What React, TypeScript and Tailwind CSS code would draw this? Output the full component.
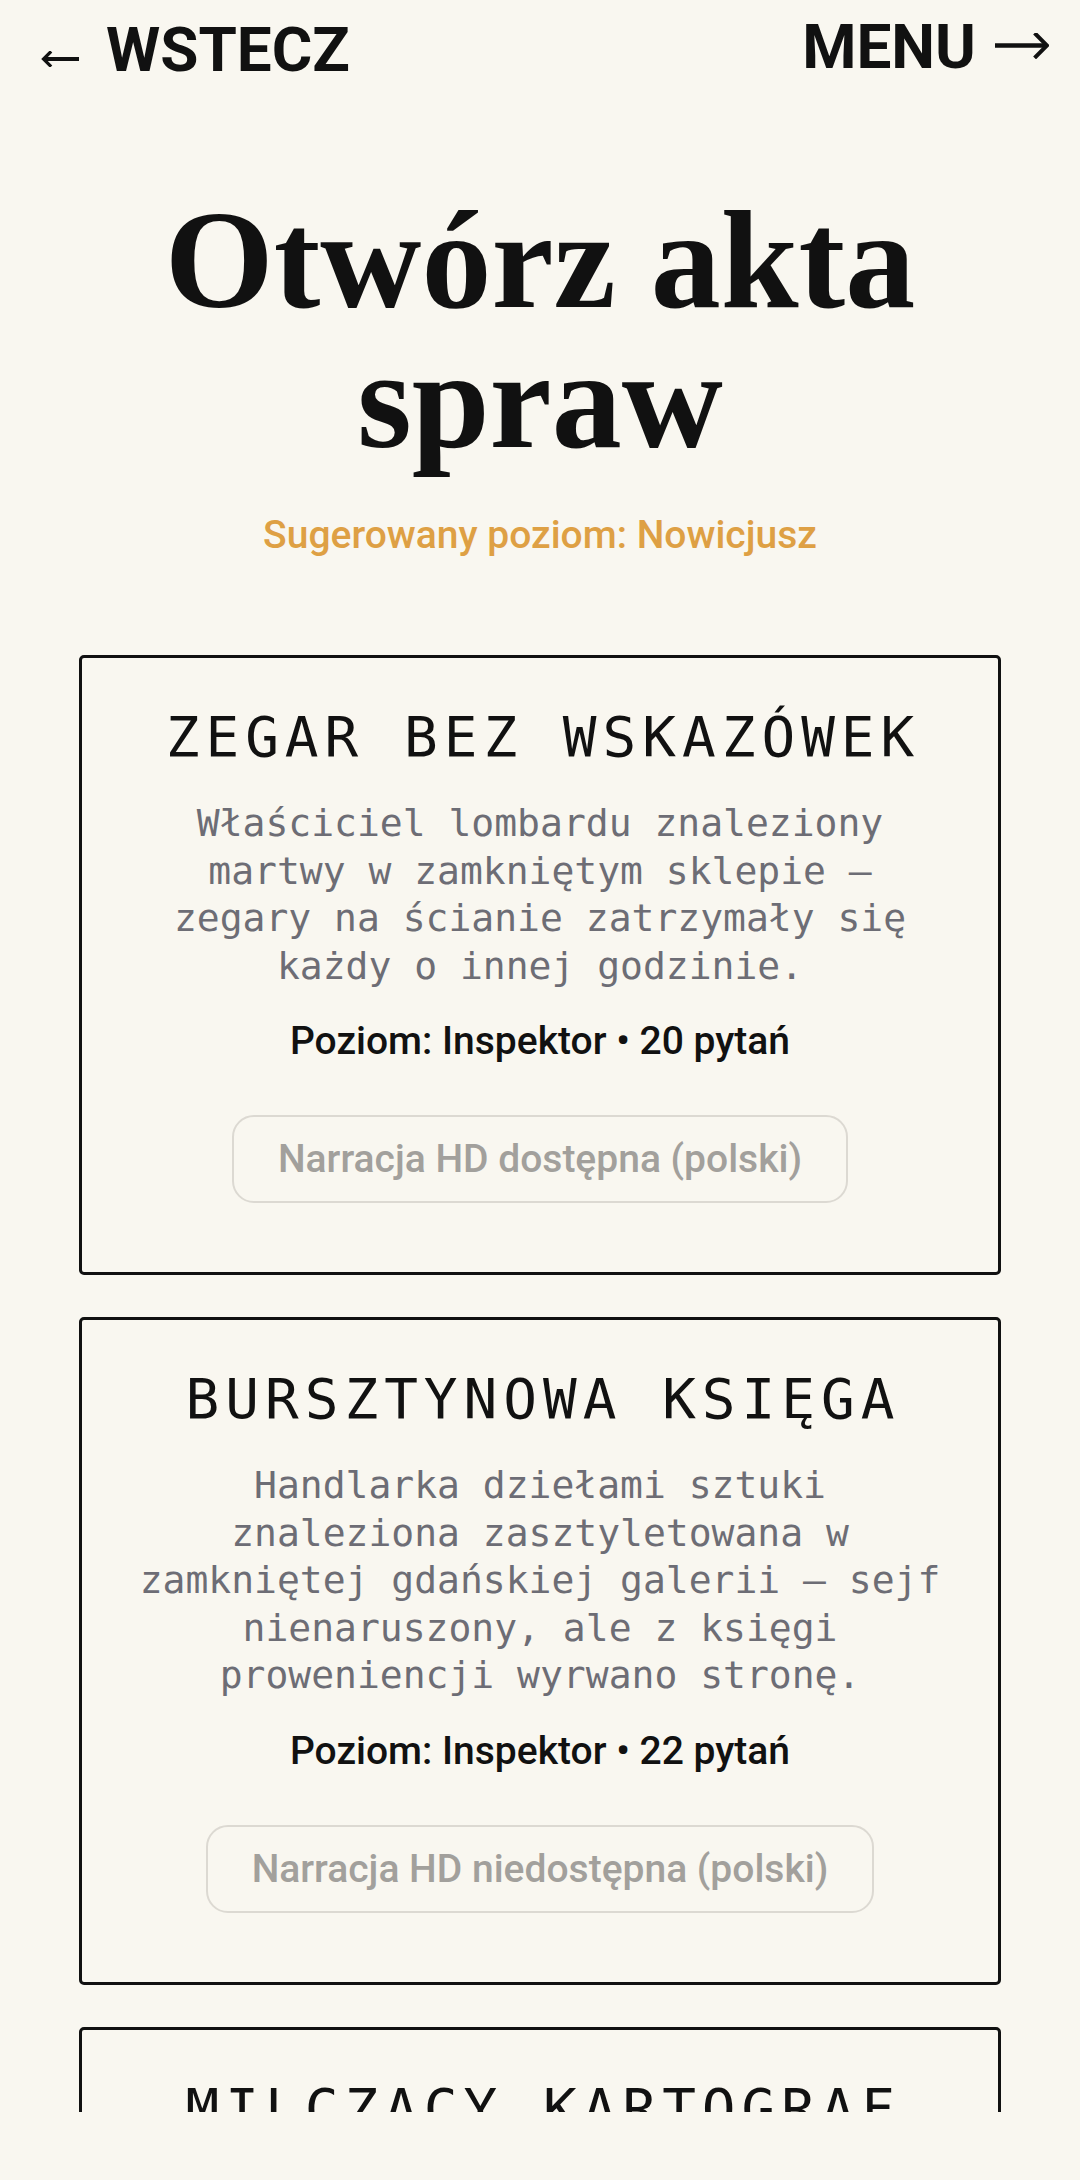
import React from "react";

type CaseFile = {
  id: string;
  title: string;
  summary: string;
  level: string;
  questions: number;
  narration: boolean;
};

const cases: CaseFile[] = [
  {
    id: "zegar",
    title: "ZEGAR BEZ WSKAZÓWEK",
    summary:
      "Właściciel lombardu znaleziony martwy w zamkniętym sklepie — zegary na ścianie zatrzymały się każdy o innej godzinie.",
    level: "Inspektor",
    questions: 20,
    narration: true,
  },
  {
    id: "bursztyn",
    title: "BURSZTYNOWA KSIĘGA",
    summary:
      "Handlarka dziełami sztuki znaleziona zasztyletowana w zamkniętej gdańskiej galerii — sejf nienaruszony, ale z księgi proweniencji wyrwano stronę.",
    level: "Inspektor",
    questions: 22,
    narration: false,
  },
  {
    id: "kartograf",
    title: "MILCZĄCY KARTOGRAF",
    summary:
      "Stary kartograf znaleziony w swojej pracowni nad mapą miasta — jedna z ulic została starannie wymazana.",
    level: "Detektyw",
    questions: 18,
    narration: true,
  },
];

const ArrowLeft = () => (
  <svg width="38" height="16" viewBox="0 0 38 16" className="mt-[32px] shrink-0">
    <path d="M4 8H38" stroke="#111" strokeWidth="4" fill="none" />
    <path d="M9 1.5L2.5 8L9 14.5" stroke="#111" strokeWidth="3.2" fill="none" strokeLinecap="square" />
  </svg>
);

const ArrowRight = () => (
  <svg width="54" height="26" viewBox="0 0 54 26" className="mt-[17px] shrink-0">
    <path d="M0 12.5H50" stroke="#111" strokeWidth="4.5" fill="none" />
    <path d="M41 1.5L52 12.5L41 23.5" stroke="#111" strokeWidth="4" fill="none" strokeLinecap="square" />
  </svg>
);

const CaseCard = ({ item }: { item: CaseFile }) => {
  return (
    <div className="w-[922px] mx-auto border-[3px] border-[#111] rounded-[5px] pt-[45px] pb-[69px] px-[53px] flex flex-col items-center text-center">
      {/* trailing tracking pushes the line left, pl evens it out */}
      <h2 className="pl-[6px] font-['DejaVu_Sans_Mono',monospace] text-[56px] leading-[68px] tracking-[6px] text-[#111]">
        {item.title}
      </h2>
      <p className="mt-[29px] w-[812px] font-['DejaVu_Sans_Mono',monospace] text-[38px] leading-[47.5px] text-[#6d6d75]">
        {item.summary}
      </p>
      <p className="mt-[24px] font-['Roboto',sans-serif] font-medium text-[39px] leading-[54px] text-[#111]">
        Poziom: {item.level} • {item.questions} pytań
      </p>
      <button
        disabled
        className="mt-[47px] border-2 border-[#dcd9d2] rounded-[22px] px-[44px] py-[15px] font-['Roboto',sans-serif] font-medium text-[39px] leading-[54px] text-[#a2a09c]"
      >
        {item.narration ? "Narracja HD dostępna (polski)" : "Narracja HD niedostępna (polski)"}
      </button>
    </div>
  );
};

export default function App() {
  return (
    <div className="w-[1080px] h-[2180px] bg-[#f9f7f0]">
      <div className="h-[2112px] overflow-hidden">
        {/* top navigation */}
        <header className="flex justify-between items-start pt-[16px] font-['Roboto',sans-serif] font-bold text-[62px] leading-[62px] text-[#111]">
          <div className="flex items-start pl-[41px] pt-[3px] gap-[27px]">
            <ArrowLeft />
            <span>WSTECZ</span>
          </div>
          <div className="flex items-start pr-[31px] gap-[19px]">
            <span>MENU</span>
            <ArrowRight />
          </div>
        </header>

        <h1 className="mt-[109px] text-center font-['Liberation_Serif',serif] font-bold text-[140px] leading-[140px] text-[#111]">
          Otwórz akta
          <br />
          spraw
        </h1>
        <p className="mt-[38px] text-center font-['Roboto',sans-serif] font-medium text-[39px] leading-[54px] text-[#dea044]">
          Sugerowany poziom: Nowicjusz
        </p>

        <div className="mt-[93px] flex flex-col gap-[42px]">
          {cases.map((c) => (
            <CaseCard key={c.id} item={c} />
          ))}
        </div>
      </div>
    </div>
  );
}
